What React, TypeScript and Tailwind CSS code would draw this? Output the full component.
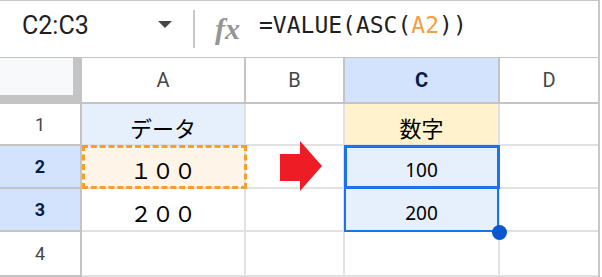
import React from "react";

const COLS = ["w-[82px]", "w-[164px]", "w-[99px]", "w-[155px]", "w-[98px]"];

function Cell({
  w,
  h,
  bg = "bg-white",
  border = "border-[#e1e1e1]",
  last = false,
  children,
  cls = "",
}: {
  w: string;
  h: string;
  bg?: string;
  border?: string;
  last?: boolean;
  children?: React.ReactNode;
  cls?: string;
}) {
  return (
    <div
      className={`${w} ${h} ${bg} ${border} shrink-0 border-b-2 ${last ? "" : "border-r-2"} flex items-center justify-center ${cls}`}
    >
      {children}
    </div>
  );
}

const jp = "font-['Noto_Sans_CJK_JP',sans-serif] pt-[6px]";
const num = "font-['Noto_Sans',sans-serif] text-[19px] text-black pt-[8px]";

export default function App() {
  return (
    <div className="w-[600px] h-[277px] bg-white border-t border-r-2 border-[#c8c8c8] overflow-hidden font-['Roboto',sans-serif]">
      {/* formula bar */}
      <div className="h-[57px] border-b border-[#c4c4c4] flex items-center">
        <div className="ml-[22px] mb-[8px] text-[25px] leading-[25px] text-[#1f1f1f] w-[136px]">
          C2:C3
        </div>
        <svg width="14" height="7" viewBox="0 0 14 7" className="mb-[10px]">
          <polygon points="0,0 14,0 7,7" fill="#444746" />
        </svg>
        <div className="ml-[21px] w-[2px] h-[38px] bg-[#c8c8c8]" />
        <div className="ml-[20px] w-[28px] text-[30px] leading-[30px] italic font-bold text-[#959595] font-['Liberation_Serif',serif]">
          fx
        </div>
        <div className="ml-[16px] mb-[8px] text-[23px] leading-[24px] text-[#1f1f1f] font-['DejaVu_Sans_Mono',monospace] whitespace-pre">
          =VALUE(ASC(<span className="text-[#f4a040]">A2</span>))
        </div>
      </div>

      {/* sheet */}
      <div className="relative">
        {/* header row */}
        <div className="flex">
          <div className="w-[82px] h-[46px] bg-[#c4c4c4] shrink-0">
            <div className="w-[73px] h-[37px] bg-[#f8f9fa]" />
          </div>
          <Cell w={COLS[1]} h="h-[46px]" border="border-[#c4c4c4]" cls="text-[20px] text-[#444746]">
            A
          </Cell>
          <Cell w={COLS[2]} h="h-[46px]" border="border-[#c4c4c4]" cls="text-[20px] text-[#444746]">
            B
          </Cell>
          <Cell w={COLS[3]} h="h-[46px]" bg="bg-[#d3e3fd]" border="border-[#c4c4c4]" cls="text-[20px] font-bold text-[#041e49]">
            C
          </Cell>
          <Cell w={COLS[4]} h="h-[46px]" border="border-[#c4c4c4]" last cls="text-[20px] text-[#444746]">
            D
          </Cell>
        </div>

        {/* row 1 */}
        <div className="flex">
          <Cell w={COLS[0]} h="h-[42px]" border="border-[#c4c4c4]" cls="text-[18px] text-[#444746]">
            1
          </Cell>
          <Cell w={COLS[1]} h="h-[42px]" bg="bg-[#e5f0fc]" cls={`${jp} text-[22px] text-black`}>
            データ
          </Cell>
          <Cell w={COLS[2]} h="h-[42px]" />
          <Cell w={COLS[3]} h="h-[42px]" bg="bg-[#fff2cc]" cls={`${jp} text-[22px] text-black`}>
            数字
          </Cell>
          <Cell w={COLS[4]} h="h-[42px]" last />
        </div>

        {/* row 2 */}
        <div className="flex">
          <Cell w={COLS[0]} h="h-[43px]" bg="bg-[#d3e3fd]" border="border-[#c4c4c4]" cls="text-[18px] font-bold text-[#041e49]">
            2
          </Cell>
          <Cell w={COLS[1]} h="h-[43px]" bg="bg-[#fef4e8]" cls={`${jp} text-[22px] text-black`}>
            １００
          </Cell>
          <Cell w={COLS[2]} h="h-[43px]" />
          <Cell w={COLS[3]} h="h-[43px]" bg="bg-[#e6effc]" cls={num}>
            100
          </Cell>
          <Cell w={COLS[4]} h="h-[43px]" last />
        </div>

        {/* row 3 */}
        <div className="flex">
          <Cell w={COLS[0]} h="h-[43px]" bg="bg-[#d3e3fd]" border="border-[#c4c4c4]" cls="text-[18px] font-bold text-[#041e49]">
            3
          </Cell>
          <Cell w={COLS[1]} h="h-[43px]" cls={`${jp} text-[22px] text-black`}>
            ２００
          </Cell>
          <Cell w={COLS[2]} h="h-[43px]" />
          <Cell w={COLS[3]} h="h-[43px]" bg="bg-[#e6effc]" cls={num}>
            200
          </Cell>
          <Cell w={COLS[4]} h="h-[43px]" last />
        </div>

        {/* row 4 */}
        <div className="flex">
          <Cell w={COLS[0]} h="h-[45px]" border="border-[#c4c4c4]" cls="text-[18px] text-[#444746]">
            4
          </Cell>
          <Cell w={COLS[1]} h="h-[45px]" />
          <Cell w={COLS[2]} h="h-[45px]" />
          <Cell w={COLS[3]} h="h-[45px]" />
          <Cell w={COLS[4]} h="h-[45px]" last />
        </div>

        {/* overlays */}
        <div className="absolute left-[82px] top-[87px] w-[165px] h-[44px] border-[3px] border-dashed border-[#f5a02a]" />
        <svg className="absolute left-[280px] top-[83px]" width="42" height="50" viewBox="0 0 42 50">
          <polygon points="0,13 20,13 20,0 42,25 20,50 20,40 0,40" fill="#ee1c25" />
        </svg>
        <div className="absolute left-[344px] top-[87px] w-[155px] h-[87px] border-2 border-[#1a73e8]" />
        <div className="absolute left-[344px] top-[87px] w-[156px] h-[44px] border-[3px] border-[#1a73e8]" />
        <div className="absolute left-[492px] top-[167px] w-[15px] h-[15px] rounded-full bg-[#0b57d0]" />
      </div>
    </div>
  );
}
